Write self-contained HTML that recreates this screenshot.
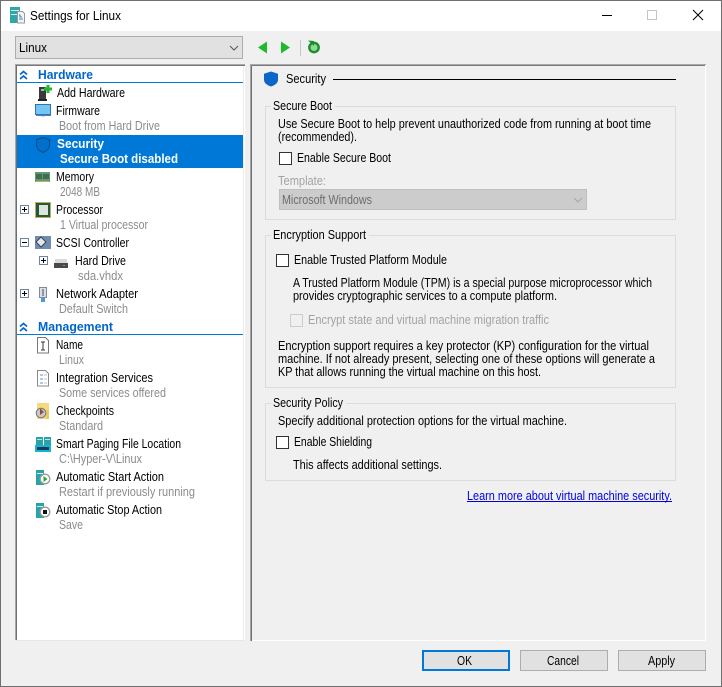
<!DOCTYPE html>
<html><head><meta charset="utf-8"><title>Settings for Linux</title>
<style>
html,body{margin:0;padding:0;width:722px;height:687px;overflow:hidden;background:#f0f0f0}
svg{display:block}
text{font-family:"Liberation Sans",sans-serif;font-size:12.5px;fill:#000;white-space:pre}
.g{fill:#8c8c8c}
.d{fill:#a3a3a3}
.h{fill:#0066cc;font-weight:bold;font-size:12.5px}
.w{fill:#fff;font-weight:bold}
.box{fill:none;stroke:#dcdcdc}
.cb{fill:#fff;stroke:#333}
.pm{fill:#fff;stroke:#6b87a3}
</style></head><body>
<svg width="722" height="687" viewBox="0 0 722 687" xmlns="http://www.w3.org/2000/svg" shape-rendering="crispEdges">
<rect width="722" height="687" fill="#f0f0f0"/>
<rect x="0" y="0" width="722" height="31" fill="#fff"/>
<rect x="0.5" y="0.5" width="721" height="686" fill="none" stroke="#6f6f6f"/>

<!-- title bar -->
<rect x="10" y="7" width="10" height="16" fill="#2fa7a7"/>
<rect x="11" y="10" width="8" height="1" fill="#d0f0f0"/><rect x="11" y="14" width="8" height="1" fill="#d0f0f0"/>
<path d="M17.500 11.500h5l2 2v9.500h-7z" fill="#f4f4f4" stroke="#9a9a9a"/>
<path d="M19 15h1v2h2M19 19h4" stroke="#3b7fc4" fill="none"/>
<text x="30" y="20" textLength="91" lengthAdjust="spacingAndGlyphs">Settings for Linux</text>
<rect x="602" y="15" width="10" height="1" fill="#000"/>
<rect x="647.5" y="10.5" width="9" height="9" fill="none" stroke="#c4c4c4"/>
<path d="M693 10l10 10M703 10l-10 10" stroke="#000" fill="none" shape-rendering="auto"/>

<!-- combobox -->
<rect x="15.5" y="36.5" width="227" height="22" fill="#e1e1e1" stroke="#adadad"/>
<text x="19" y="52" textLength="28" lengthAdjust="spacingAndGlyphs">Linux</text>
<path d="M230 46l4 4 4-4" stroke="#555" fill="none" shape-rendering="auto"/>

<!-- toolbar -->
<g shape-rendering="auto">
<path d="M258 47.500l9-6v12z" fill="#1fba2c"/>
<path d="M281 41.500l9 6-9 6z" fill="#1fba2c"/>
<circle cx="314" cy="47.500" r="4.700" fill="#8fd89a" stroke="#1b8f2a" stroke-width="2.400"/>
<path d="M308 40.500l6 .5v5z" fill="#1b8f2a"/>
</g>
<rect x="300" y="40" width="1" height="16" fill="#c8c8c8"/>

<!-- left list -->
<rect x="15" y="64" width="230" height="577" fill="#fff"/>
<rect x="15" y="64" width="230" height="1" fill="#a8a8a8"/>
<rect x="15" y="65" width="230" height="1" fill="#7a7a7a"/>
<rect x="15" y="64" width="1" height="577" fill="#a8a8a8"/>
<rect x="16" y="65" width="1" height="576" fill="#6f6f6f"/>
<rect x="243" y="66" width="1" height="575" fill="#ececec"/>
<rect x="15" y="640" width="230" height="1" fill="#e6e6e6"/>

<g shape-rendering="auto"><path d="M20 74.500l3.500-3 3.500 3M20 79l3.500-3 3.500 3" fill="none" stroke="#0066cc" stroke-width="1.700"/></g>
<text class="h" x="38" y="79" textLength="55" lengthAdjust="spacingAndGlyphs">Hardware</text>
<rect x="17" y="82" width="226" height="1" fill="#0078d7"/>

<!-- add hardware -->
<rect x="39" y="87" width="7" height="12" fill="#3a3a3a"/><rect x="38" y="99" width="9" height="2" fill="#222"/><rect x="41" y="89" width="3" height="2" fill="#9bc"/>
<path d="M46.500 85h3v2.500h2.500v3h-2.500v2.500h-3v-2.500h-2.500v-3h2.500z" fill="#22b82e"/>
<text x="57" y="97" textLength="68" lengthAdjust="spacingAndGlyphs">Add Hardware</text>

<!-- firmware -->
<rect x="35.5" y="104.5" width="15" height="10" fill="#74c6f2" stroke="#2f73b5"/>
<rect x="36" y="115" width="15" height="1" fill="#4a86bd"/>
<rect x="41" y="116" width="4" height="1" fill="#d8d8d8"/>
<text x="56" y="115" textLength="44" lengthAdjust="spacingAndGlyphs">Firmware</text>
<text class="g" x="59" y="130" textLength="101" lengthAdjust="spacingAndGlyphs">Boot from Hard Drive</text>

<rect x="17" y="135" width="226" height="33" fill="#0078d7"/>
<g shape-rendering="auto"><path d="M43 137.500l6.500 2v6c0 3.500-3 5.500-6.500 7-3.500-1.500-6.500-3.500-6.500-7v-6z" fill="#0070cc" stroke="#0c4f8c" stroke-width="1.100"/></g>
<text class="w" x="57" y="148" textLength="47" lengthAdjust="spacingAndGlyphs">Security</text>
<text class="w" x="60" y="163" textLength="118" lengthAdjust="spacingAndGlyphs">Secure Boot disabled</text>

<!-- memory -->
<rect x="35" y="172" width="15" height="10" fill="#5a9a75"/>
<path d="M37 174v5M39 174v5M41 174v5M44 174v5M46 174v5M48 174v5" stroke="#2c3c30"/>
<rect x="36" y="181" width="13" height="1" fill="#c6b35e"/>
<text x="56" y="181" textLength="38" lengthAdjust="spacingAndGlyphs">Memory</text>
<text class="g" x="60" y="196" textLength="40" lengthAdjust="spacingAndGlyphs">2048 MB</text>

<!-- processor -->
<rect x="20.5" y="205.500" width="8" height="8" class="pm"/><path d="M22 209.500h5M24.500 207v5" stroke="#000"/>
<rect x="35" y="202" width="16" height="16" fill="#c7a95a"/>
<rect x="36" y="203" width="14" height="14" fill="#1f5a3c"/><rect x="39" y="205" width="9" height="10" fill="#dbe5de"/>
<text x="56" y="214" textLength="47" lengthAdjust="spacingAndGlyphs">Processor</text>
<text class="g" x="60" y="229" textLength="88" lengthAdjust="spacingAndGlyphs">1 Virtual processor</text>

<!-- scsi -->
<rect x="20.5" y="238.500" width="8" height="8" class="pm"/><path d="M22 242.500h5" stroke="#000"/>
<rect x="35" y="236" width="16" height="13" fill="#6f8db3"/>
<g shape-rendering="auto"><path d="M41 237l5 5-5 5-5-5z" fill="#e3e7ec" stroke="#3a414c"/></g>
<text x="56" y="247" textLength="73" lengthAdjust="spacingAndGlyphs">SCSI Controller</text>

<!-- hard drive -->
<rect x="39.500" y="256.500" width="8" height="8" class="pm"/><path d="M41 260.500h5M43.500 258v5" stroke="#000"/>
<rect x="55" y="259" width="12" height="4" fill="#d9d9d9"/><rect x="54" y="263" width="14" height="5" fill="#4a4a4a"/><rect x="63" y="265" width="2" height="1" fill="#3ec24a"/>
<text x="75" y="265" textLength="51" lengthAdjust="spacingAndGlyphs">Hard Drive</text>
<text class="g" x="78" y="280" textLength="45" lengthAdjust="spacingAndGlyphs">sda.vhdx</text>

<!-- network -->
<rect x="20.5" y="289.500" width="8" height="8" class="pm"/><path d="M22 293.500h5M24.500 291v5" stroke="#000"/>
<rect x="39.500" y="287.500" width="7" height="10" fill="#dbe0e6" stroke="#7d8a99"/><rect x="42" y="289" width="2" height="7" fill="#8a97a6"/><rect x="41" y="298" width="4" height="4" fill="#4b9ad6"/>
<text x="56" y="298" textLength="82" lengthAdjust="spacingAndGlyphs">Network Adapter</text>
<text class="g" x="59" y="313" textLength="69" lengthAdjust="spacingAndGlyphs">Default Switch</text>

<g shape-rendering="auto"><path d="M20 326.500l3.500-3 3.500 3M20 331l3.500-3 3.500 3" fill="none" stroke="#0066cc" stroke-width="1.700"/></g>
<text class="h" x="38" y="331" textLength="75" lengthAdjust="spacingAndGlyphs">Management</text>
<rect x="17" y="334" width="226" height="1" fill="#0078d7"/>

<!-- name -->
<path d="M37.500 337.500h8l3 3v12.500h-11z" fill="#fff" stroke="#777"/>
<path d="M41 342h4M43 342v8M41 350h4" stroke="#333" fill="none"/>
<text x="56" y="349" textLength="27" lengthAdjust="spacingAndGlyphs">Name</text>
<text class="g" x="59" y="364" textLength="25" lengthAdjust="spacingAndGlyphs">Linux</text>

<!-- integration -->
<path d="M37.500 370.500h8l3 3v12.500h-11z" fill="#fff" stroke="#8a8a8a"/>
<path d="M40 375h3M40 379h3M40 383h3" stroke="#5b93cc"/><path d="M44 375h3M44 379h3M44 383h3" stroke="#c2c2c2"/>
<text x="56" y="382" textLength="97" lengthAdjust="spacingAndGlyphs">Integration Services</text>
<text class="g" x="59" y="397" textLength="107" lengthAdjust="spacingAndGlyphs">Some services offered</text>

<!-- checkpoints -->
<rect x="37" y="403" width="12" height="16" fill="#f5d97c"/><rect x="46" y="410" width="3" height="9" fill="#ecc95e"/>
<g shape-rendering="auto"><circle cx="41" cy="413" r="4.800" fill="#c9c9c9" stroke="#777"/><path d="M40 408.500l4 3.500-4 3z" fill="#b03a2a"/><path d="M41 409l2.500 2.500-1.500 1" fill="#2f9a3a"/></g>
<text x="56" y="415" textLength="58" lengthAdjust="spacingAndGlyphs">Checkpoints</text>
<text class="g" x="59" y="430" textLength="44" lengthAdjust="spacingAndGlyphs">Standard</text>

<!-- smart paging -->
<rect x="36" y="437" width="7" height="8" fill="#2aa3a8"/><rect x="44" y="437" width="7" height="8" fill="#2aa3a8"/>
<rect x="37" y="439" width="5" height="1" fill="#b6e6e6"/><rect x="45" y="439" width="5" height="1" fill="#b6e6e6"/>
<rect x="35" y="445" width="16" height="7" fill="#12b5d6"/>
<rect x="37" y="447" width="12" height="3" fill="#1a3b55"/>
<text x="56" y="448" textLength="125" lengthAdjust="spacingAndGlyphs">Smart Paging File Location</text>
<text class="g" x="59" y="463" textLength="83" lengthAdjust="spacingAndGlyphs">C:\Hyper-V\Linux</text>

<!-- start -->
<rect x="36" y="470" width="8" height="15" fill="#2aa3a8"/><rect x="37" y="473" width="6" height="1" fill="#d0f0f0"/>
<g shape-rendering="auto"><circle cx="45" cy="479" r="4.800" fill="#fff" stroke="#9a9a9a" stroke-width="1.300"/><path d="M43.500 476l4 3-4 3z" fill="#21a82f"/></g>
<text x="56" y="481" textLength="108" lengthAdjust="spacingAndGlyphs">Automatic Start Action</text>
<text class="g" x="59" y="496" textLength="136" lengthAdjust="spacingAndGlyphs">Restart if previously running</text>

<!-- stop -->
<rect x="36" y="503" width="8" height="15" fill="#2aa3a8"/><rect x="37" y="506" width="6" height="1" fill="#d0f0f0"/>
<g shape-rendering="auto"><circle cx="45" cy="512" r="4.800" fill="#fff" stroke="#9a9a9a" stroke-width="1.300"/></g>
<rect x="43" y="510" width="4" height="4" fill="#111"/>
<text x="56" y="514" textLength="106" lengthAdjust="spacingAndGlyphs">Automatic Stop Action</text>
<text class="g" x="59" y="529" textLength="24" lengthAdjust="spacingAndGlyphs">Save</text>

<!-- right panel -->
<rect x="250" y="64" width="1" height="577" fill="#a8a8a8"/>
<rect x="251" y="65" width="1" height="576" fill="#6f6f6f"/>
<rect x="250" y="64" width="456" height="1" fill="#a8a8a8"/>
<rect x="251" y="65" width="454" height="1" fill="#7a7a7a"/>
<rect x="705" y="65" width="1" height="576" fill="#fff"/>
<rect x="252" y="640" width="454" height="1" fill="#fff"/>

<g shape-rendering="auto"><path d="M271 71.500l7 2.200v6c0 3.300-3 5.300-7 6.800-4-1.500-7-3.500-7-6.800v-6z" fill="#0a66c8"/></g>
<text x="286" y="83" textLength="40" lengthAdjust="spacingAndGlyphs">Security</text>
<rect x="333" y="79" width="343" height="1" fill="#000"/>

<!-- Secure Boot -->
<rect x="265.500" y="106.500" width="410" height="113" class="box"/>
<rect x="271" y="100" width="64" height="12" fill="#f0f0f0"/>
<text x="273" y="110" textLength="59" lengthAdjust="spacingAndGlyphs">Secure Boot</text>
<text x="278" y="128" textLength="373" lengthAdjust="spacingAndGlyphs">Use Secure Boot to help prevent unauthorized code from running at boot time</text>
<text x="278" y="141" textLength="79" lengthAdjust="spacingAndGlyphs">(recommended).</text>
<rect x="279.500" y="152.500" width="12" height="12" class="cb"/>
<text x="297" y="162" textLength="94" lengthAdjust="spacingAndGlyphs">Enable Secure Boot</text>
<text class="d" x="278" y="185" textLength="48" lengthAdjust="spacingAndGlyphs">Template:</text>
<rect x="279.500" y="189.500" width="307" height="20" fill="#cccccc" stroke="#bfbfbf"/>
<text x="282" y="204" textLength="90" lengthAdjust="spacingAndGlyphs" style="fill:#6d6d6d">Microsoft Windows</text>
<path d="M574 198l4 4 4-4" stroke="#a5a5a5" fill="none" shape-rendering="auto"/>

<!-- Encryption -->
<rect x="265.500" y="235.500" width="410" height="152" class="box"/>
<rect x="271" y="229" width="98" height="12" fill="#f0f0f0"/>
<text x="273" y="239" textLength="93" lengthAdjust="spacingAndGlyphs">Encryption Support</text>
<rect x="276.500" y="254.500" width="12" height="12" class="cb"/>
<text x="294" y="264" textLength="153" lengthAdjust="spacingAndGlyphs">Enable Trusted Platform Module</text>
<text x="293" y="287" textLength="359" lengthAdjust="spacingAndGlyphs">A Trusted Platform Module (TPM) is a special purpose microprocessor which</text>
<text x="293" y="300" textLength="264" lengthAdjust="spacingAndGlyphs">provides cryptographic services to a compute platform.</text>
<rect x="290.500" y="314.500" width="12" height="12" fill="#f0f0f0" stroke="#cccccc"/>
<text class="d" x="308" y="324" textLength="241" lengthAdjust="spacingAndGlyphs">Encrypt state and virtual machine migration traffic</text>
<text x="278" y="350" textLength="371" lengthAdjust="spacingAndGlyphs">Encryption support requires a key protector (KP) configuration for the virtual</text>
<text x="278" y="363" textLength="377" lengthAdjust="spacingAndGlyphs">machine. If not already present, selecting one of these options will generate a</text>
<text x="278" y="376" textLength="263" lengthAdjust="spacingAndGlyphs">KP that allows running the virtual machine on this host.</text>

<!-- Security Policy -->
<rect x="265.500" y="403.500" width="410" height="77" class="box"/>
<rect x="271" y="397" width="75" height="12" fill="#f0f0f0"/>
<text x="273" y="407" textLength="70" lengthAdjust="spacingAndGlyphs">Security Policy</text>
<text x="278" y="425" textLength="289" lengthAdjust="spacingAndGlyphs">Specify additional protection options for the virtual machine.</text>
<rect x="276.500" y="436.500" width="12" height="12" class="cb"/>
<text x="294" y="446" textLength="78" lengthAdjust="spacingAndGlyphs">Enable Shielding</text>
<text x="293" y="469" textLength="149" lengthAdjust="spacingAndGlyphs">This affects additional settings.</text>
<text x="467" y="500" textLength="205" lengthAdjust="spacingAndGlyphs" style="fill:#0000e6">Learn more about virtual machine security.</text>
<rect x="467" y="501" width="205" height="1" fill="#0000e6"/>

<!-- buttons -->
<rect x="423" y="651" width="86" height="19" fill="#e1e1e1" stroke="#0078d7" stroke-width="2"/>
<text x="457" y="665" textLength="15" lengthAdjust="spacingAndGlyphs">OK</text>
<rect x="520.500" y="650.500" width="87" height="20" fill="#e1e1e1" stroke="#adadad"/>
<text x="547" y="665" textLength="32" lengthAdjust="spacingAndGlyphs">Cancel</text>
<rect x="618.500" y="650.500" width="87" height="20" fill="#e1e1e1" stroke="#adadad"/>
<text x="648" y="665" textLength="27" lengthAdjust="spacingAndGlyphs">Apply</text>
</svg>
</body></html>
